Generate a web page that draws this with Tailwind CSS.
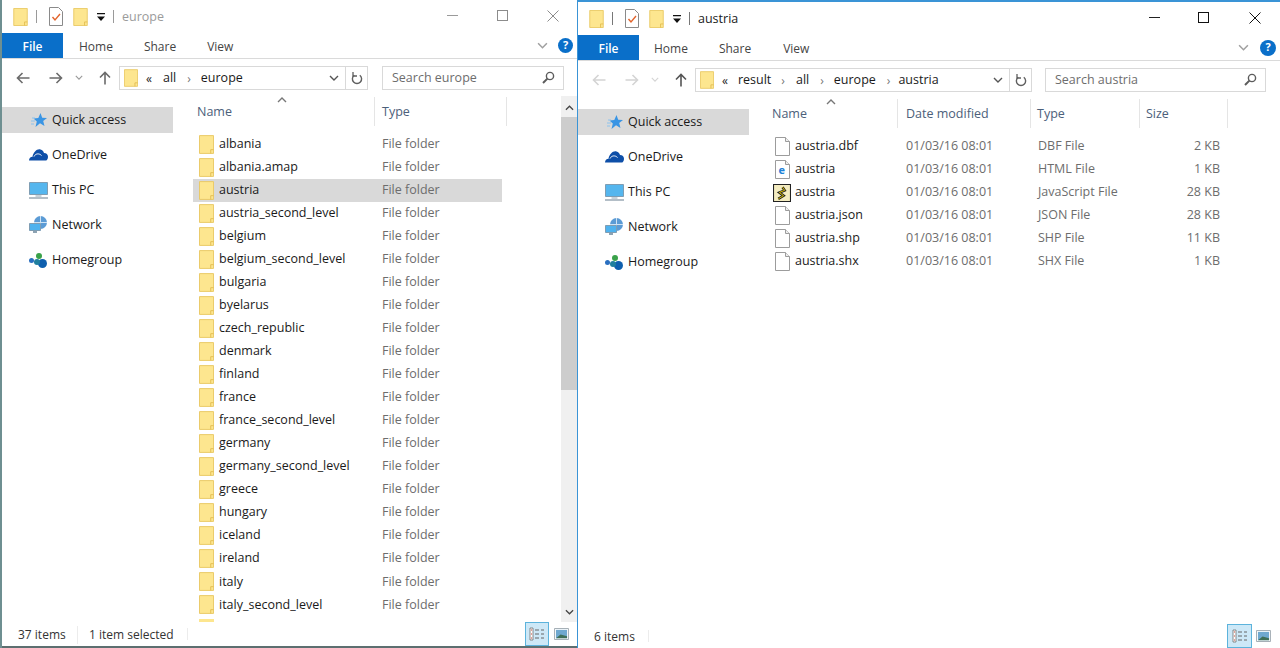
<!DOCTYPE html>
<html>
<head>
<meta charset="utf-8">
<title>Explorer</title>
<script src="https://cdn.jsdelivr.net/npm/@tailwindcss/browser@4"></script>
</head>
<body class="w-[1280px] h-[648px] overflow-hidden bg-white text-[12.5px] text-[#1a1a1a] [font-family:'Open_Sans',sans-serif]">
<!-- shared icons -->
<svg class="hidden">
  <symbol id="folder" viewBox="0 0 16 20"><path d="M.5.5h15v19H.5z" fill="#fde68f" stroke="#e9c862"/><path d="M12.500 19.500v-4h3" fill="none" stroke="#e3bd52"/></symbol>
  <symbol id="check" viewBox="0 0 14 19"><path d="M.5.5h9l4 4v14H.5z" fill="#fff" stroke="#8a8a8a"/><path d="M3.5 10l2.5 3 5-6" fill="none" stroke="#e2642c" stroke-width="1.4"/></symbol>
  <symbol id="drop" viewBox="0 0 8 8"><path d="M0 0h8v1.200H0zM0 3.500h8L4 8z" fill="#111"/></symbol>
  <symbol id="back" viewBox="0 0 14 12"><path d="M13.5 6H1.5M6.5 1l-5 5 5 5" fill="none" stroke="currentColor" stroke-width="1.6"/></symbol>
  <symbol id="fwd" viewBox="0 0 14 12"><path d="M.5 6h12M7.5 1l5 5-5 5" fill="none" stroke="currentColor" stroke-width="1.6"/></symbol>
  <symbol id="up" viewBox="0 0 12 14"><path d="M6 13.5V1.5M1 6.5l5-5 5 5" fill="none" stroke="currentColor" stroke-width="1.6"/></symbol>
  <symbol id="chev" viewBox="0 0 10 6"><path d="M1 1l4 4 4-4" fill="none" stroke="currentColor" stroke-width="1.4"/></symbol>
  <symbol id="refresh" viewBox="0 0 12 14"><path d="M3.2 4.2a4.6 4.6 0 1 0 5.6 0" fill="none" stroke="#5f5f5f" stroke-width="1.4"/><path d="M2 1v4h4" fill="none" stroke="#5f5f5f" stroke-width="1.3"/></symbol>
  <symbol id="search" viewBox="0 0 13 13"><circle cx="8" cy="5" r="3.6" fill="none" stroke="#5c5c5c" stroke-width="1.4"/><path d="M5.4 7.6L1 12" stroke="#5c5c5c" stroke-width="2"/></symbol>
  <symbol id="star" viewBox="0 0 16 15"><path d="M9.5 0l1.700 4.800 4.800.2-3.800 3.100L13.500 13 9 10.200 4.500 14l1.300-5.600L2.500 5.500l4.800-.5z" fill="#3a95e4"/><path d="M0 8h4M0 11h3M1 5h3" stroke="#8cc3ee"/></symbol>
  <symbol id="cloud" viewBox="0 0 19 12"><path d="M0 11.500c0-2.500 1.500-3.800 3.500-3.800C4.500 3 8-.5 11.500.5c1.800.5 3 1.800 3.500 3.500 2.500 0 4 1.500 4 3.800 0 2-1 3.700-2 3.700z" fill="#0e4fa8"/><path d="M5 7.500C6.500 4.500 10 4 12.500 6.500" fill="none" stroke="#fff"/></symbol>
  <symbol id="pc" viewBox="0 0 19 17"><path d="M.5.5h18v12H.5z" fill="#55b6ee" stroke="#7f9db3"/><path d="M6.500 13h6v2h-6z" fill="#c7d2da"/><path d="M0 16h19" stroke="#9aa9b5" stroke-width="1.500"/></symbol>
  <symbol id="net" viewBox="0 0 18 18"><circle cx="11.500" cy="6.500" r="6.500" fill="#5b9bd5"/><path d="M11.500 0v13M5 6.500h13" stroke="#cfe3f4"/><path d="M.5 7.500h11v7h-11z" fill="#4fb2ee" stroke="#7f9db3"/><path d="M4 15h4v2H4z" fill="#8ea3b3"/></symbol>
  <symbol id="home" viewBox="0 0 18 15"><circle cx="2.500" cy="7.500" r="2.500" fill="#2a6fc0"/><circle cx="10" cy="3" r="3" fill="#3aa24a"/><circle cx="13.500" cy="10.500" r="4.500" fill="#0e5fae"/><circle cx="8" cy="9" r="3" fill="#1f7f9f"/></symbol>
  <symbol id="file" viewBox="0 0 15 19"><path d="M.5.500h10l4 4v14H.500z" fill="#fff" stroke="#9c9c9c"/><path d="M10.500.500v4h4" fill="#eee" stroke="#9c9c9c"/></symbol>
  <symbol id="details" viewBox="0 0 16 14"><path d="M1 1h3v12H1z" fill="#fff" stroke="#6f6f6f" stroke-width=".8"/><path d="M2 3h1M2 7h1M2 11h1" stroke="#c43"/><path d="M6 3h4M12 3h3M6 7h4M12 7h3M6 11h4M12 11h3" stroke="#666"/></symbol>
  <symbol id="thumbs" viewBox="0 0 16 13"><path d="M.5.500h15v12H.500z" fill="#fff" stroke="#9aa5ad"/><path d="M2 2h12v9H2z" fill="#6fa8cf"/><path d="M2 11l5-4 7 2v2z" fill="#3f6f57"/></symbol>
</svg>

<main class="flex w-full h-full">
  <!-- left window: europe (inactive) -->
  <section class="flex flex-col w-[577px] h-[648px] shrink-0 border-l-2 border-[#6e8f91] bg-white">
    <div class="flex items-center h-[33px] shrink-0 pl-[11px]">
      <svg class="w-[15px] h-[18px]"><use href="#folder"/></svg>
      <span class="w-px h-[13px] ml-[8px] bg-[#9a9a9a]"></span>
      <svg class="w-[14px] h-[19px] ml-[12px]"><use href="#check"/></svg>
      <svg class="w-[15px] h-[18px] ml-[10px]"><use href="#folder"/></svg>
      <svg class="w-[8px] h-[8px] ml-[9px]"><use href="#drop"/></svg>
      <span class="w-px h-[13px] ml-[8px] bg-[#9a9a9a]"></span>
      <span class="ml-[8px] mt-[2px] text-[#9b9b9b]">europe</span>
      <div class="flex items-center ml-auto text-[#8c8c8c] mb-[2px]">
        <span class="w-[11px] h-px bg-[#9a9a9a]"></span>
        <span class="w-[11px] h-[11px] ml-[39px] border border-[#8c8c8c]"></span>
        <svg class="w-[12px] h-[12px] ml-[39px] mr-[18px]" viewBox="0 0 12 12"><path d="M.5.500l11 11M11.500.500l-11 11" stroke="#8c8c8c"/></svg>
      </div>
    </div>
    <div class="flex items-center h-[26px] shrink-0 border-b border-[#dadada] text-[12px] text-[#444]">
      <span class="flex items-center justify-center w-[61px] h-[25px] pt-[2px] bg-[#0a6fc9] text-white font-semibold">File</span>
      <span class="ml-[16px] mt-[2px]">Home</span>
      <span class="ml-[31px] mt-[2px]">Share</span>
      <span class="ml-[31px] mt-[2px]">View</span>
      <svg class="w-[11px] h-[7px] ml-auto text-[#a0a0a0]"><use href="#chev"/></svg>
      <span class="flex items-center justify-center w-[15px] h-[15px] ml-[10px] mr-[4px] rounded-full bg-[#0a6fc9] text-white text-[11px] font-bold">?</span>
    </div>
    <div class="flex items-center h-[37px] shrink-0 pl-[14px] text-[#6b6b6b]">
      <svg class="w-[14px] h-[12px]"><use href="#back"/></svg>
      <svg class="w-[14px] h-[12px] ml-[19px]"><use href="#fwd"/></svg>
      <svg class="w-[8px] h-[5px] ml-[12px] text-[#9a9a9a]"><use href="#chev"/></svg>
      <svg class="w-[12px] h-[14px] ml-[16px]"><use href="#up"/></svg>
      <div class="flex items-center w-[249px] h-[24px] ml-[8px] border border-[#d9d9d9] text-[#1a1a1a]">
        <svg class="w-[14px] h-[18px] ml-[4px]"><use href="#folder"/></svg>
        <span class="ml-[8px] mt-[2px] text-[12px]">«</span>
        <span class="ml-[11px] mt-[2px]">all</span>
        <span class="ml-[11px] mt-[2px] text-[#777] text-[12px]">›</span>
        <span class="ml-[10px] mt-[2px]">europe</span>
        <svg class="w-[10px] h-[6px] ml-auto text-[#555]"><use href="#chev"/></svg>
        <span class="w-px h-full ml-[6px] bg-[#d9d9d9]"></span>
        <svg class="w-[12px] h-[14px] ml-[5px] mr-[4px]"><use href="#refresh"/></svg>
      </div>
      <div class="flex items-center justify-between w-[182px] h-[24px] ml-[14px] pl-[9px] pr-[8px] border border-[#d9d9d9] text-[#6d6d6d]">
        <span class="mt-[2px]">Search europe</span>
        <svg class="w-[13px] h-[13px]"><use href="#search"/></svg>
      </div>
    </div>
    <div class="flex flex-1 min-h-0">
      <nav class="flex flex-col w-[171px] shrink-0 pt-[11px]">
        <a class="flex items-center h-[26px] pl-[29px] gap-[5px] bg-[#d9d9d9]"><svg class="w-[16px] h-[15px]"><use href="#star"/></svg>Quick access</a>
        <a class="flex items-center h-[26px] mt-[9px] pl-[27px] gap-[4px]"><svg class="w-[19px] h-[12px]"><use href="#cloud"/></svg>OneDrive</a>
        <a class="flex items-center h-[26px] mt-[9px] pl-[27px] gap-[4px]"><svg class="w-[19px] h-[17px]"><use href="#pc"/></svg>This PC</a>
        <a class="flex items-center h-[26px] mt-[9px] pl-[27px] gap-[5px]"><svg class="w-[18px] h-[18px]"><use href="#net"/></svg>Network</a>
        <a class="flex items-center h-[26px] mt-[9px] pl-[27px] gap-[5px]"><svg class="w-[18px] h-[15px]"><use href="#home"/></svg>Homegroup</a>
      </nav>
      <div class="flex flex-col flex-1 min-w-0 pl-[20px] overflow-hidden">
        <div class="relative flex items-center h-[29px] mt-[1px] shrink-0 text-[#4c607a]">
          <svg class="absolute left-[84px] top-0 w-[10px] h-[6px] text-[#777] rotate-180"><use href="#chev"/></svg>
          <span class="w-[181px] pl-[4px] mt-[2px]">Name</span>
          <span class="flex items-center w-[133px] h-full pl-[7px] pt-[2px] border-l border-r border-[#e5e5e5]">Type</span>
        </div>
        <ul class="mt-[6.5px] w-[309px]">
          <li class="flex items-center h-[23.05px]"><svg class="w-[15px] h-[19px] ml-[6px]"><use href="#folder"/></svg><span class="w-[163px] ml-[5px]">albania</span><span class="text-[#6d6d6d]">File folder</span></li>
          <li class="flex items-center h-[23.05px]"><svg class="w-[15px] h-[19px] ml-[6px]"><use href="#folder"/></svg><span class="w-[163px] ml-[5px]">albania.amap</span><span class="text-[#6d6d6d]">File folder</span></li>
          <li class="flex items-center h-[23.05px] bg-[#d9d9d9]"><svg class="w-[15px] h-[19px] ml-[6px]"><use href="#folder"/></svg><span class="w-[163px] ml-[5px]">austria</span><span class="text-[#6d6d6d]">File folder</span></li>
          <li class="flex items-center h-[23.05px]"><svg class="w-[15px] h-[19px] ml-[6px]"><use href="#folder"/></svg><span class="w-[163px] ml-[5px]">austria_second_level</span><span class="text-[#6d6d6d]">File folder</span></li>
          <li class="flex items-center h-[23.05px]"><svg class="w-[15px] h-[19px] ml-[6px]"><use href="#folder"/></svg><span class="w-[163px] ml-[5px]">belgium</span><span class="text-[#6d6d6d]">File folder</span></li>
          <li class="flex items-center h-[23.05px]"><svg class="w-[15px] h-[19px] ml-[6px]"><use href="#folder"/></svg><span class="w-[163px] ml-[5px]">belgium_second_level</span><span class="text-[#6d6d6d]">File folder</span></li>
          <li class="flex items-center h-[23.05px]"><svg class="w-[15px] h-[19px] ml-[6px]"><use href="#folder"/></svg><span class="w-[163px] ml-[5px]">bulgaria</span><span class="text-[#6d6d6d]">File folder</span></li>
          <li class="flex items-center h-[23.05px]"><svg class="w-[15px] h-[19px] ml-[6px]"><use href="#folder"/></svg><span class="w-[163px] ml-[5px]">byelarus</span><span class="text-[#6d6d6d]">File folder</span></li>
          <li class="flex items-center h-[23.05px]"><svg class="w-[15px] h-[19px] ml-[6px]"><use href="#folder"/></svg><span class="w-[163px] ml-[5px]">czech_republic</span><span class="text-[#6d6d6d]">File folder</span></li>
          <li class="flex items-center h-[23.05px]"><svg class="w-[15px] h-[19px] ml-[6px]"><use href="#folder"/></svg><span class="w-[163px] ml-[5px]">denmark</span><span class="text-[#6d6d6d]">File folder</span></li>
          <li class="flex items-center h-[23.05px]"><svg class="w-[15px] h-[19px] ml-[6px]"><use href="#folder"/></svg><span class="w-[163px] ml-[5px]">finland</span><span class="text-[#6d6d6d]">File folder</span></li>
          <li class="flex items-center h-[23.05px]"><svg class="w-[15px] h-[19px] ml-[6px]"><use href="#folder"/></svg><span class="w-[163px] ml-[5px]">france</span><span class="text-[#6d6d6d]">File folder</span></li>
          <li class="flex items-center h-[23.05px]"><svg class="w-[15px] h-[19px] ml-[6px]"><use href="#folder"/></svg><span class="w-[163px] ml-[5px]">france_second_level</span><span class="text-[#6d6d6d]">File folder</span></li>
          <li class="flex items-center h-[23.05px]"><svg class="w-[15px] h-[19px] ml-[6px]"><use href="#folder"/></svg><span class="w-[163px] ml-[5px]">germany</span><span class="text-[#6d6d6d]">File folder</span></li>
          <li class="flex items-center h-[23.05px]"><svg class="w-[15px] h-[19px] ml-[6px]"><use href="#folder"/></svg><span class="w-[163px] ml-[5px]">germany_second_level</span><span class="text-[#6d6d6d]">File folder</span></li>
          <li class="flex items-center h-[23.05px]"><svg class="w-[15px] h-[19px] ml-[6px]"><use href="#folder"/></svg><span class="w-[163px] ml-[5px]">greece</span><span class="text-[#6d6d6d]">File folder</span></li>
          <li class="flex items-center h-[23.05px]"><svg class="w-[15px] h-[19px] ml-[6px]"><use href="#folder"/></svg><span class="w-[163px] ml-[5px]">hungary</span><span class="text-[#6d6d6d]">File folder</span></li>
          <li class="flex items-center h-[23.05px]"><svg class="w-[15px] h-[19px] ml-[6px]"><use href="#folder"/></svg><span class="w-[163px] ml-[5px]">iceland</span><span class="text-[#6d6d6d]">File folder</span></li>
          <li class="flex items-center h-[23.05px]"><svg class="w-[15px] h-[19px] ml-[6px]"><use href="#folder"/></svg><span class="w-[163px] ml-[5px]">ireland</span><span class="text-[#6d6d6d]">File folder</span></li>
          <li class="flex items-center h-[23.05px]"><svg class="w-[15px] h-[19px] ml-[6px]"><use href="#folder"/></svg><span class="w-[163px] ml-[5px]">italy</span><span class="text-[#6d6d6d]">File folder</span></li>
          <li class="flex items-center h-[23.05px]"><svg class="w-[15px] h-[19px] ml-[6px]"><use href="#folder"/></svg><span class="w-[163px] ml-[5px]">italy_second_level</span><span class="text-[#6d6d6d]">File folder</span></li>
        </ul>
        <svg class="w-[15px] h-[4px] ml-[6px] mt-[3px] shrink-0" viewBox="0 0 15 4"><path d="M0 0h15v4H0z" fill="#fde68f"/></svg>
      </div>
      <!-- scrollbar -->
      <div class="flex flex-col items-center w-[16px] shrink-0 bg-[#f0f0f0]">
        <svg class="w-[9px] h-[6px] mt-[9px] mb-[6px] text-[#444] rotate-180"><use href="#chev"/></svg>
        <span class="w-full h-[273px] bg-[#cdcdcd]"></span>
        <svg class="w-[9px] h-[6px] mt-auto mb-[7px] text-[#444]"><use href="#chev"/></svg>
      </div>
    </div>
    <div class="flex items-center h-[24px] shrink-0 text-[12px] text-[#333]">
      <span class="pl-[16px] w-[75px] mt-[2px]">37 items</span>
      <span class="pl-[11px] w-[110px] border-l border-[#ececec] mt-[2px]">1 item selected</span>
      <span class="w-px h-[12px] bg-[#ececec]"></span>
      <span class="flex items-center justify-center w-[24px] h-[24px] ml-auto border border-[#5cb3dc] bg-[#cde8f7]"><svg class="w-[16px] h-[14px]"><use href="#details"/></svg></span>
      <svg class="w-[15px] h-[12px] ml-[5px] mr-[8px]"><use href="#thumbs"/></svg>
    </div>
    <div class="h-[2px] shrink-0 bg-[#5d6f70]"></div>
  </section>

  <!-- right window: austria (active) -->
  <section class="flex flex-col flex-1 min-w-0 h-[648px] border-l border-t-2 border-[#3a94d6] bg-white">
    <div class="flex items-center h-[33px] shrink-0 pl-[11px]">
      <svg class="w-[15px] h-[18px]"><use href="#folder"/></svg>
      <span class="w-px h-[13px] ml-[8px] bg-[#777]"></span>
      <svg class="w-[14px] h-[19px] ml-[12px]"><use href="#check"/></svg>
      <svg class="w-[15px] h-[18px] ml-[10px]"><use href="#folder"/></svg>
      <svg class="w-[8px] h-[8px] ml-[9px]"><use href="#drop"/></svg>
      <span class="w-px h-[13px] ml-[8px] bg-[#777]"></span>
      <span class="ml-[8px] mt-[2px]">austria</span>
      <div class="flex items-center ml-auto mb-[2px]">
        <span class="w-[11px] h-[1.500px] bg-[#222]"></span>
        <span class="w-[11px] h-[11px] ml-[38px] border border-[#111]"></span>
        <svg class="w-[12px] h-[12px] ml-[40px] mr-[19px]" viewBox="0 0 12 12"><path d="M.5.500l11 11M11.500.500l-11 11" stroke="#111"/></svg>
      </div>
    </div>
    <div class="flex items-center h-[26px] shrink-0 border-b border-[#dadada] text-[12px] text-[#444]">
      <span class="flex items-center justify-center w-[61px] h-[25px] pt-[2px] bg-[#0a6fc9] text-white font-semibold">File</span>
      <span class="ml-[15px] mt-[2px]">Home</span>
      <span class="ml-[31px] mt-[2px]">Share</span>
      <span class="ml-[32px] mt-[2px]">View</span>
      <svg class="w-[11px] h-[7px] ml-auto text-[#a0a0a0]"><use href="#chev"/></svg>
      <span class="flex items-center justify-center w-[16px] h-[16px] ml-[11px] mr-[4px] rounded-full bg-[#0a6fc9] text-white text-[11px] font-bold">?</span>
    </div>
    <div class="flex items-center h-[37px] shrink-0 pl-[14px] text-[#222]">
      <svg class="w-[14px] h-[12px] text-[#d4d4d4]"><use href="#back"/></svg>
      <svg class="w-[14px] h-[12px] ml-[19px] text-[#d4d4d4]"><use href="#fwd"/></svg>
      <svg class="w-[8px] h-[5px] ml-[12px] text-[#d4d4d4]"><use href="#chev"/></svg>
      <svg class="w-[12px] h-[14px] ml-[16px] text-[#555]"><use href="#up"/></svg>
      <div class="flex items-center w-[337px] h-[24px] ml-[8px] border border-[#d9d9d9] text-[#1a1a1a]">
        <svg class="w-[14px] h-[18px] ml-[4px]"><use href="#folder"/></svg>
        <span class="ml-[8px] mt-[2px] text-[12px]">«</span>
        <span class="ml-[10px] mt-[2px]">result</span>
        <span class="ml-[10px] mt-[2px] text-[#777] text-[12px]">›</span>
        <span class="ml-[11px] mt-[2px]">all</span>
        <span class="ml-[11px] mt-[2px] text-[#777] text-[12px]">›</span>
        <span class="ml-[10px] mt-[2px]">europe</span>
        <span class="ml-[11px] mt-[2px] text-[#777] text-[12px]">›</span>
        <span class="ml-[8px] mt-[2px]">austria</span>
        <svg class="w-[10px] h-[6px] ml-auto text-[#555]"><use href="#chev"/></svg>
        <span class="w-px h-full ml-[6px] bg-[#d9d9d9]"></span>
        <svg class="w-[12px] h-[14px] ml-[5px] mr-[4px]"><use href="#refresh"/></svg>
      </div>
      <div class="flex items-center justify-between w-[221px] h-[24px] ml-[13px] pl-[9px] pr-[8px] border border-[#d9d9d9] text-[#6d6d6d]">
        <span class="mt-[2px]">Search austria</span>
        <svg class="w-[13px] h-[13px]"><use href="#search"/></svg>
      </div>
    </div>
    <div class="flex flex-1 min-h-0">
      <nav class="flex flex-col w-[171px] shrink-0 pt-[11px]">
        <a class="flex items-center h-[26px] pl-[29px] gap-[5px] bg-[#d9d9d9]"><svg class="w-[16px] h-[15px]"><use href="#star"/></svg>Quick access</a>
        <a class="flex items-center h-[26px] mt-[9px] pl-[27px] gap-[4px]"><svg class="w-[19px] h-[12px]"><use href="#cloud"/></svg>OneDrive</a>
        <a class="flex items-center h-[26px] mt-[9px] pl-[27px] gap-[4px]"><svg class="w-[19px] h-[17px]"><use href="#pc"/></svg>This PC</a>
        <a class="flex items-center h-[26px] mt-[9px] pl-[27px] gap-[5px]"><svg class="w-[18px] h-[18px]"><use href="#net"/></svg>Network</a>
        <a class="flex items-center h-[26px] mt-[9px] pl-[27px] gap-[5px]"><svg class="w-[18px] h-[15px]"><use href="#home"/></svg>Homegroup</a>
      </nav>
      <div class="flex flex-col flex-1 min-w-0 pl-[20px]">
        <div class="relative flex items-center h-[29px] mt-[1px] shrink-0 text-[#4c607a]">
          <svg class="absolute left-[57px] top-0 w-[10px] h-[6px] text-[#777] rotate-180"><use href="#chev"/></svg>
          <span class="w-[128px] pl-[3px] mt-[2px]">Name</span>
          <span class="flex items-center w-[133px] h-full pl-[8px] pt-[2px] border-l border-[#e5e5e5]">Date modified</span>
          <span class="flex items-center w-[109px] h-full pl-[6px] pt-[2px] border-l border-[#e5e5e5]">Type</span>
          <span class="flex items-center w-[89px] h-full pl-[6px] pt-[2px] border-l border-r border-[#e5e5e5]">Size</span>
        </div>
        <ul class="mt-[7px] w-[460px]">
          <li class="flex items-center h-[23px]"><svg class="w-[15px] h-[19px] ml-[6px] mr-[5px]"><use href="#file"/></svg><span class="w-[111px]">austria.dbf</span><span class="w-[132px] text-[#6d6d6d]">01/03/16 08:01</span><span class="w-[109px] text-[#6d6d6d]">DBF File</span><span class="w-[73px] text-right text-[#6d6d6d]">2 KB</span></li>
          <li class="flex items-center h-[23px]"><svg class="w-[15px] h-[19px] ml-[6px] mr-[5px]" viewBox="0 0 15 19"><use href="#file"/><text x="3.500" y="14" font-size="11" font-weight="700" fill="#1f82d8">e</text></svg><span class="w-[111px]">austria</span><span class="w-[132px] text-[#6d6d6d]">01/03/16 08:01</span><span class="w-[109px] text-[#6d6d6d]">HTML File</span><span class="w-[73px] text-right text-[#6d6d6d]">1 KB</span></li>
          <li class="flex items-center h-[23px]"><svg class="w-[18px] h-[18px] ml-[4px] mr-[4px]" viewBox="0 0 17 17"><path d="M.5.500h16v16H.500z" fill="#f4ecc0" stroke="#222"/><path d="M5 14l5-3-4-3 5-2-2-3" fill="none" stroke="#222" stroke-width="2.400"/><path d="M5 14l5-3-4-3 5-2-2-3" fill="none" stroke="#e6c800" stroke-width=".9"/></svg><span class="w-[111px]">austria</span><span class="w-[132px] text-[#6d6d6d]">01/03/16 08:01</span><span class="w-[109px] text-[#6d6d6d]">JavaScript File</span><span class="w-[73px] text-right text-[#6d6d6d]">28 KB</span></li>
          <li class="flex items-center h-[23px]"><svg class="w-[15px] h-[19px] ml-[6px] mr-[5px]"><use href="#file"/></svg><span class="w-[111px]">austria.json</span><span class="w-[132px] text-[#6d6d6d]">01/03/16 08:01</span><span class="w-[109px] text-[#6d6d6d]">JSON File</span><span class="w-[73px] text-right text-[#6d6d6d]">28 KB</span></li>
          <li class="flex items-center h-[23px]"><svg class="w-[15px] h-[19px] ml-[6px] mr-[5px]"><use href="#file"/></svg><span class="w-[111px]">austria.shp</span><span class="w-[132px] text-[#6d6d6d]">01/03/16 08:01</span><span class="w-[109px] text-[#6d6d6d]">SHP File</span><span class="w-[73px] text-right text-[#6d6d6d]">11 KB</span></li>
          <li class="flex items-center h-[23px]"><svg class="w-[15px] h-[19px] ml-[6px] mr-[5px]"><use href="#file"/></svg><span class="w-[111px]">austria.shx</span><span class="w-[132px] text-[#6d6d6d]">01/03/16 08:01</span><span class="w-[109px] text-[#6d6d6d]">SHX File</span><span class="w-[73px] text-right text-[#6d6d6d]">1 KB</span></li>
        </ul>
      </div>
    </div>
    <div class="flex items-center h-[24px] shrink-0 text-[12px] text-[#333]">
      <span class="pl-[16px] w-[70px] mt-[2px]">6 items</span>
      <span class="w-px h-[12px] bg-[#ececec]"></span>
      <span class="flex items-center justify-center w-[25px] h-[24px] ml-auto border border-[#5cb3dc] bg-[#cde8f7]"><svg class="w-[16px] h-[14px]"><use href="#details"/></svg></span>
      <svg class="w-[15px] h-[12px] ml-[4px] mr-[9px]"><use href="#thumbs"/></svg>
    </div>
  </section>
</main>
</body>
</html>
